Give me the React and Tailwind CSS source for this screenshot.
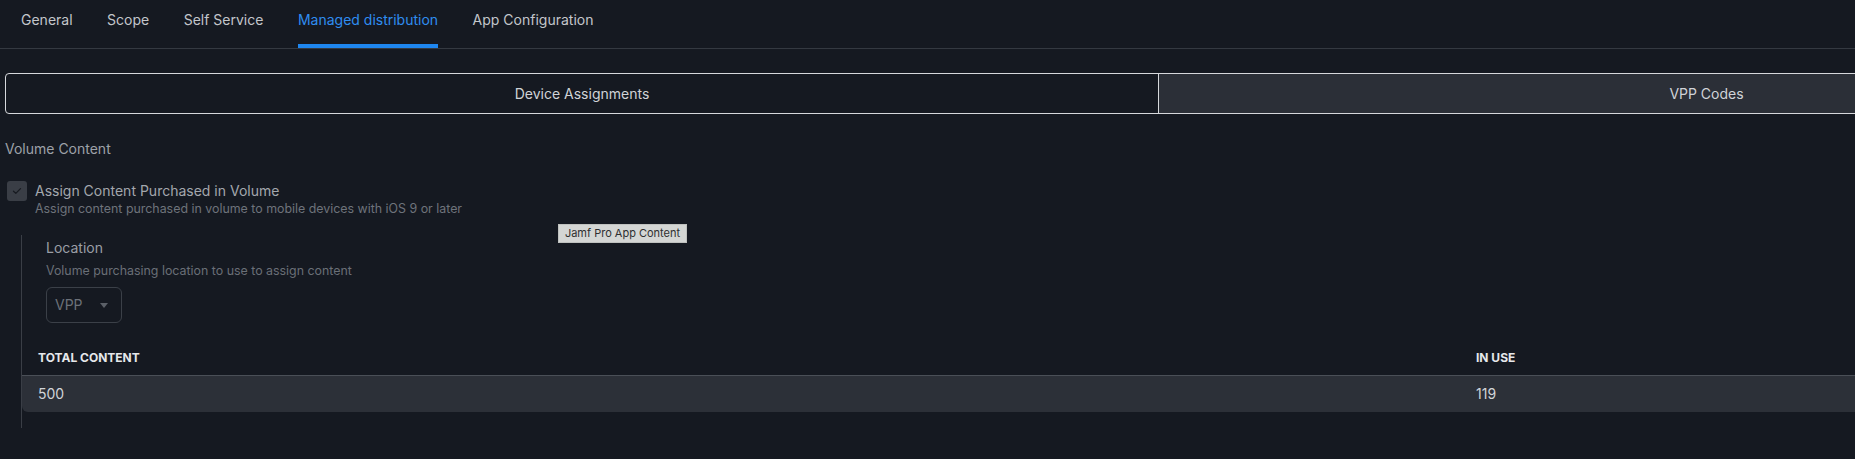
import React from 'react';

const tabs = ['General', 'Scope', 'Self Service', 'Managed distribution', 'App Configuration'];

const App = () => {
    const active = 'Managed distribution';

    return (
        <div className="relative h-[459px] w-full overflow-hidden bg-[#151921] font-['Inter',sans-serif] text-sm">
            {/* tab bar */}
            <nav className="flex h-[49px] w-[2260px] gap-[34.5px] border-b border-[#343941] pl-[21px]">
                {tabs.map((tab) => (
                    <div
                        key={tab}
                        className={
                            tab === active
                                ? 'flex h-12 items-start border-b-4 border-[#1e86ef] pt-[10px] text-sm leading-5 text-[#2f8df0]'
                                : 'flex h-12 items-start border-b-4 border-transparent pt-[10px] text-sm leading-5 text-[#c3c6cb]'
                        }
                    >
                        {tab}
                    </div>
                ))}
            </nav>

            <div className="w-[2260px] px-[5px]">
                {/* segmented control */}
                <div className="mt-6 flex h-[41px] w-[2250px] overflow-hidden rounded-[4px] border border-[#d6d8dc]">
                    <div className="flex w-[1153px] items-center justify-center border-r border-[#d6d8dc] text-[#d0d3d7]">
                        Device Assignments
                    </div>
                    <div className="flex flex-1 items-center justify-center bg-[#2b2f37] text-[#d0d3d7]">
                        VPP Codes
                    </div>
                </div>

                <div className="mt-[25px] leading-5 text-[#9da1a8]">Volume Content</div>

                {/* checkbox */}
                <div className="mt-[22px] flex items-start gap-[8px] pl-[2px]">
                    <div className="flex size-5 items-center justify-center rounded-[3px] bg-[#3a3e46]">
                        <svg width="10" height="8" viewBox="0 0 10 8" fill="none">
                            <path d="M1.5 4.2 L3.8 6.4 L8.5 1.6" stroke="#181b21" strokeWidth="1.3" strokeLinecap="round" strokeLinejoin="round" />
                        </svg>
                    </div>
                    <div>
                        <div className="leading-5 text-[#a3a7ad]">Assign Content Purchased in Volume</div>
                        <div className="text-[12.4px] leading-4 text-[#6e737b]">
                            Assign content purchased in volume to mobile devices with iOS 9 or later
                        </div>
                    </div>
                </div>

                {/* nested location block */}
                <div className="ml-4 mt-[18px] border-l border-[#3a3e46] pb-[16px] pt-[3px]">
                    <div className="pl-6">
                        <div className="leading-5 text-[#9a9ea5]">Location</div>
                        <div className="mt-[5px] text-[12.4px] leading-4 text-[#6a6f77]">
                            Volume purchasing location to use to assign content
                        </div>
                        <div className="mt-[8px] flex h-[36px] w-[76px] items-center justify-between rounded-[6px] border border-[#3b4048] pl-2 pr-[13px] text-[#6c7179]">
                            <span>VPP</span>
                            <svg width="8" height="5" viewBox="0 0 8 5">
                                <path d="M0 0 H8 L4 5 Z" fill="#5b6068" />
                            </svg>
                        </div>
                    </div>

                    <div className="mt-[17px] flex h-9 items-center border-b border-[#4a4f57] text-xs font-bold text-[#e6e8eb]">
                        <div className="w-[1438px] pl-4">TOTAL CONTENT</div>
                        <div className="pl-4">IN USE</div>
                    </div>
                    <div className="flex h-9 items-center rounded-bl-[6px] bg-[#2c3038] text-[#d1d4d8]">
                        <div className="w-[1438px] pl-4">500</div>
                        <div className="pl-4">119</div>
                    </div>
                </div>
            </div>

            {/* tooltip */}
            <div className="absolute left-[558px] top-[224px] flex h-[19px] w-[129px] items-center justify-center border border-[#bfc1bf] bg-[#d4d6d4] text-[11px] text-[#2e2f30]">
                Jamf Pro App Content
            </div>
        </div>
    );
};

export default App;
